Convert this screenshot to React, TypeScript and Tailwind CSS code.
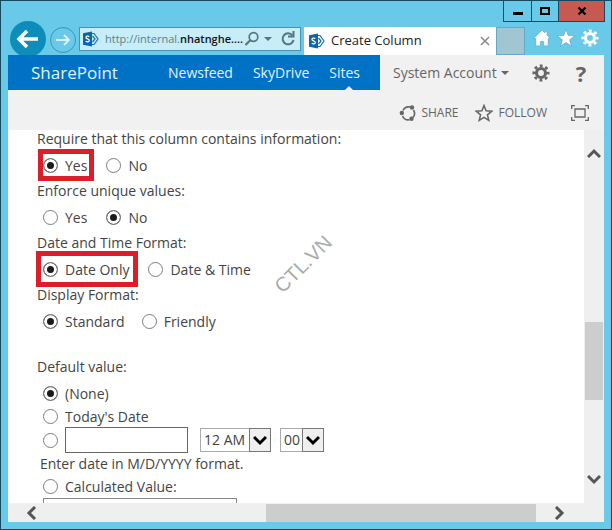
import type { ReactNode } from 'react'

function SharePointLogo() {
  return (
    <svg className="h-4 w-4 shrink-0" viewBox="0 0 16 16" fill="none">
      <path d="M8.5 2.5h2.5l4 5.5-4 5.5H8.5" stroke="#1172ba" strokeWidth="1.2" />
      <path d="M9.5 5l2.5 3-2.5 3" stroke="#1172ba" strokeWidth="1.2" />
      <path d="M0 2.2L9 .5v15l-9-1.7z" fill="#0a66ae" />
      <path d="M6.3 5.6C5 4.900 3 5 3 6.400c0 1.700 3.300 1.300 3.300 3.100 0 1.500-2.200 1.600-3.600.8" stroke="#fff" strokeWidth="1.3" />
    </svg>
  )
}

function Gear({ className }: { className: string }) {
  return (
    <svg className={className} viewBox="0 0 20 20" fill="none" stroke="currentColor">
      <circle cx="10" cy="10" r="5" strokeWidth="3.5" />
      <circle cx="10" cy="10" r="8" strokeWidth="3" strokeDasharray="3.14 3.14" strokeDashoffset="1.57" />
    </svg>
  )
}

function Chevron({ className, d }: { className: string; d: string }) {
  return (
    <svg className={className} viewBox="0 0 14 14" fill="none" stroke="currentColor" strokeWidth="3">
      <path d={d} />
    </svg>
  )
}

function TitleBar() {
  return (
    <div className="flex h-[22px] shrink-0 items-start justify-end pr-1.5">
      <div className="flex h-[21px] border border-t-0 border-[#16485c]">
        <button aria-label="Minimize" className="flex w-[27px] items-center justify-center">
          <svg className="h-3 w-3" viewBox="0 0 12 12">
            <path d="M1 7h10v3H1z" />
          </svg>
        </button>
        <button aria-label="Maximize" className="flex w-[27px] items-center justify-center border-l border-[#16485c]">
          <svg className="h-3 w-3" viewBox="0 0 12 12" fill="none" stroke="#000">
            <path d="M2 3h8v6H2z" strokeWidth="2" />
          </svg>
        </button>
        <button aria-label="Close" className="flex w-[46px] items-center justify-center border-l border-[#16485c] bg-[#c75a50]">
          <svg className="h-3 w-3" viewBox="0 0 12 12" fill="none" stroke="#000">
            <path d="M2.500 2.500l7 7M9.500 2.500l-7 7" strokeWidth="2.2" />
          </svg>
        </button>
      </div>
    </div>
  )
}

function NavBar() {
  return (
    <div className="flex h-8 shrink-0 items-start pl-[9px] pr-3">
      <button aria-label="Back" className="-mt-0.5 flex h-9 w-9 shrink-0 items-center justify-center rounded-full bg-[#0f8dba] text-white">
        <svg className="h-5 w-6" viewBox="0 0 24 20" fill="none" stroke="currentColor" strokeWidth="3.5">
          <path d="M3 10h19M11 2l-8 8 8 8" />
        </svg>
      </button>
      <button aria-label="Forward" className="ml-1 mt-1 flex h-[26px] w-[26px] shrink-0 items-center justify-center rounded-full border border-[#3f93b4] text-[#d6f2fb]">
        <svg className="h-4 w-4" viewBox="0 0 16 16" fill="none" stroke="currentColor" strokeWidth="2">
          <path d="M1 8h13M9 3l5 5-5 5" />
        </svg>
      </button>
      <div className="ml-[3px] mt-1 flex h-6 w-[222px] items-center border border-[#4793b0] bg-[#c6edf8] pl-[3px] pr-1">
        <SharePointLogo />
        <span className="ml-1.5 flex-1 whitespace-nowrap text-[11px] text-[#5f7f8a]">
          http://internal.<span className="font-semibold text-[#111]">nhatnghe....</span>
        </span>
        <svg className="h-4 w-4 text-[#57757f]" viewBox="0 0 16 16" fill="none" stroke="currentColor">
          <circle cx="9.500" cy="6" r="4.300" strokeWidth="1.7" />
          <path d="M6.500 9l-5 5" strokeWidth="2.200" />
        </svg>
        <svg className="mx-1 h-2 w-2 text-[#57757f]" viewBox="0 0 8 8" fill="currentColor">
          <path d="M0 2h8L4 6z" />
        </svg>
        <svg className="ml-1 h-4 w-4 text-[#57757f]" viewBox="0 0 16 16" fill="none" stroke="currentColor" strokeWidth="2">
          <path d="M12.500 4.500A5.500 5.500 0 1 0 13.500 9" />
          <path d="M13.500 0v5.500H8" />
        </svg>
      </div>
      <div className="ml-[3px] mt-1 flex h-7 min-w-0 flex-1 items-center bg-white pl-[5px] pr-1.5">
        <SharePointLogo />
        <span className="ml-1.5 flex-1 whitespace-nowrap text-[13px] text-[#222]">Create Column</span>
        <button aria-label="Close tab">
          <svg className="h-2.5 w-2.5" viewBox="0 0 10 10" fill="none" stroke="#8a8a8a" strokeWidth="1.6">
            <path d="M1 1l8 8M9 1l-8 8" />
          </svg>
        </button>
      </div>
      <button aria-label="New tab" className="mt-1 h-7 w-[29px] shrink-0 border border-[#67a9c0] bg-[#a1c6d3]" />
      <div className="ml-2 mt-1.5 flex gap-1.5 text-white">
        <svg className="h-[18px] w-[18px]" viewBox="0 0 16 16" fill="currentColor" stroke="#5a9cb4" strokeWidth=".5">
          <path d="M8 1l2.500 2.500V2h2v3.500L15.500 8.500h-2V15h-4v-4h-3v4h-4V8.500h-2z" />
        </svg>
        <svg className="h-[18px] w-[18px]" viewBox="0 0 16 16" fill="currentColor" stroke="#5a9cb4" strokeWidth=".5">
          <path d="M8 .5l2 5.300 5.700.2-4.500 3.600 1.600 5.600L8 12l-4.800 3.200 1.600-5.600L.3 6l5.700-.2z" />
        </svg>
        <Gear className="h-[18px] w-[18px]" />
      </div>
    </div>
  )
}

function SuiteBar() {
  return (
    <div className="flex h-[35px] shrink-0 bg-[#f1f1f1]">
      <div className="flex flex-1 items-center justify-between bg-[#0072c6] pl-[23px] pr-5 text-[#e3f4fc]">
        <span className="text-[17px]">SharePoint</span>
        <nav className="flex h-full items-center gap-5 text-[14px]">
          <a href="#newsfeed">Newsfeed</a>
          <a href="#skydrive">SkyDrive</a>
          <a href="#sites" className="relative flex h-full items-center">
            Sites
            <svg className="absolute bottom-0 left-1/2 h-1 w-2" viewBox="0 0 8 4" fill="#f1f1f1">
              <path d="M0 4l4-4 4 4z" />
            </svg>
          </a>
        </nav>
      </div>
      <div className="flex w-56 shrink-0 items-center justify-between pl-[13px] pr-[15px] text-[#666]">
        <button className="flex items-center gap-1 whitespace-nowrap text-[14px]">
          System Account
          <svg className="h-1.5 w-2" viewBox="0 0 8 6" fill="currentColor">
            <path d="M0 1h8L4 5z" />
          </svg>
        </button>
        <button aria-label="Settings">
          <Gear className="h-[18px] w-[18px]" />
        </button>
        <button aria-label="Help" className="w-4 text-[22px] leading-5 font-bold">?</button>
      </div>
    </div>
  )
}

function Ribbon() {
  return (
    <div className="flex h-10 shrink-0 items-center justify-end bg-[#f1f1f1] pr-[15px] pt-1.5 text-[12px] text-[#666]">
      <button className="flex items-center gap-1">
        <svg className="h-[18px] w-[18px]" viewBox="0 0 18 18" fill="none" stroke="currentColor" strokeWidth="1.6">
          <path d="M4 6.500A6.500 6.500 0 0 1 11 3M14.500 6a6.500 6.500 0 0 1-.5 7.500M10.500 15.800A6.500 6.500 0 0 1 3.500 12" />
          <g fill="currentColor" stroke="none">
            <circle cx="2.800" cy="9" r="2.200" />
            <circle cx="13" cy="3.500" r="2.200" />
            <circle cx="12.500" cy="14.800" r="2.200" />
          </g>
        </svg>
        SHARE
      </button>
      <button className="ml-4 flex items-center gap-1.5">
        <svg className="h-[18px] w-[18px]" viewBox="0 0 18 18" fill="none" stroke="currentColor" strokeWidth="1.5">
          <path d="M9 1.500l2.100 5.300 5.700.4-4.400 3.600 1.400 5.500L9 13.300l-4.800 3 1.400-5.500L1.200 7.200l5.700-.4z" />
        </svg>
        FOLLOW
      </button>
      <button aria-label="Focus on content" className="ml-6">
        <svg className="h-[18px] w-[18px]" viewBox="0 0 18 18" fill="none" stroke="currentColor" strokeWidth="1.3">
          <path d="M4 5h10v8H4zM.7 5V1.700H4M14 1.700h3.300V5M17.300 13v3.300H14M4 16.300H.7V13" />
        </svg>
      </button>
    </div>
  )
}

type RadioProps = { name: string; label?: string; ariaLabel?: string; checked?: boolean; className?: string }

function Radio({ name, label, ariaLabel, checked, className = 'h-[22px]' }: RadioProps) {
  return (
    <label className={`flex items-center gap-[7px] ${className}`}>
      <input
        type="radio"
        name={name}
        aria-label={ariaLabel}
        defaultChecked={checked}
        className="h-[15px] w-[15px] shrink-0 appearance-none rounded-full border border-[#7d7d7d] bg-white checked:bg-[#1c1c1c] checked:shadow-[inset_0_0_0_3px_#fff]"
      />
      {label}
    </label>
  )
}

function Field({ title, children }: { title: string; children: ReactNode }) {
  return (
    <fieldset>
      <legend className="h-[26px] leading-[26px]">{title}</legend>
      <div className="flex h-[26px] items-center gap-[17px] pl-1.5">{children}</div>
    </fieldset>
  )
}

function TimeSelect({ label, value, className }: { label: string; value: string; className: string }) {
  return (
    <span className={`relative flex h-6 ${className}`}>
      <select aria-label={label} className="w-full appearance-none border border-[#ababab] bg-white pl-[3px] leading-5">
        <option>{value}</option>
      </select>
      <span className="pointer-events-none absolute inset-y-0 right-0 flex w-[22px] items-center justify-center border border-[#777] bg-[#efefef] text-black">
        <Chevron className="h-3.5 w-3.5" d="M1 4l6 6 6-6" />
      </span>
    </span>
  )
}

function ColumnForm() {
  return (
    <form className="-mt-1 flex-1 whitespace-nowrap pl-[29px] text-[14px] text-[#444]">
      <Field title="Require that this column contains information:">
        <Radio name="required" label="Yes" checked className="h-[22px] pr-0.5 outline-[5px] outline-[#da1f2b]" />
        <Radio name="required" label="No" />
      </Field>
      <Field title="Enforce unique values:">
        <Radio name="unique" label="Yes" className="h-[22px] pr-0.5" />
        <Radio name="unique" label="No" checked />
      </Field>
      <Field title="Date and Time Format:">
        <Radio name="format" label="Date Only" checked className="h-[22px] pr-0.5 outline-[5px] outline-offset-2 outline-[#da1f2b]" />
        <Radio name="format" label="Date & Time" />
      </Field>
      <Field title="Display Format:">
        <Radio name="display" label="Standard" checked />
        <Radio name="display" label="Friendly" />
      </Field>
      <fieldset className="mt-5">
        <legend className="h-[26px] leading-[26px]">Default value:</legend>
        <div className="pl-1.5 pt-0.5">
          <Radio name="default" label="(None)" checked className="h-[23px]" />
          <Radio name="default" label="Today's Date" className="h-[23px]" />
          <div className="flex h-6 items-center">
            <Radio name="default" ariaLabel="Specific date" className="h-[22px] pr-[7px]" />
            <input aria-label="Date" type="text" className="h-[26px] w-[123px] border border-[#666] bg-white px-1" />
            <TimeSelect label="Hour" value="12 AM" className="ml-3 w-[71px]" />
            <TimeSelect label="Minutes" value="00" className="ml-[9px] w-11" />
          </div>
          <p className="-ml-[3px] h-[23px] leading-[23px]">Enter date in M/D/YYYY format.</p>
          <Radio name="default" label="Calculated Value:" className="h-[23px]" />
          <input aria-label="Calculated value" type="text" className="block h-6 w-[194px] border border-[#888] bg-white px-1" />
        </div>
      </fieldset>
    </form>
  )
}

export default function App() {
  return (
    <div className="flex h-screen flex-col overflow-hidden border border-[#164a61] bg-[#68c9e8] font-['Open_Sans','Noto_Sans',sans-serif]">
      <TitleBar />
      <NavBar />
      <main className="relative mx-[7px] mb-[7px] flex min-h-0 flex-1 flex-col bg-white">
        <SuiteBar />
        <Ribbon />
        <div className="flex min-h-0 flex-1">
          <div className="flex min-w-0 flex-1 overflow-hidden">
            <ColumnForm />
          </div>
          <div className="flex w-5 shrink-0 flex-col items-center bg-[#efeff0] py-[17px] text-[#555]">
            <Chevron className="h-3.5 w-3.5" d="M1 10l6-6 6 6" />
            <div className="flex-[160]" />
            <div className="w-[18px] flex-[78] bg-[#cdcdcf]" />
            <div className="flex-[72]" />
            <Chevron className="h-3.5 w-3.5" d="M1 4l6 6 6-6" />
          </div>
        </div>
        <div className="flex h-[19px] shrink-0 items-center bg-[#efeff0] pl-[17px] pr-[38px] text-[#555]">
          <Chevron className="h-3.5 w-3.5" d="M10 1L4 7l6 6" />
          <div className="flex-[227]" />
          <div className="h-[18px] flex-[270] bg-[#cdcdcd]" />
          <div className="flex-[16]" />
          <Chevron className="h-3.5 w-3.5" d="M4 1l6 6-6 6" />
        </div>
        <span className="pointer-events-none absolute left-[295px] top-[209px] -translate-x-1/2 -translate-y-1/2 -rotate-45 font-['Liberation_Sans',sans-serif] text-[20px] leading-5 text-[#aaa]">
          CTL.VN
        </span>
      </main>
    </div>
  )
}
